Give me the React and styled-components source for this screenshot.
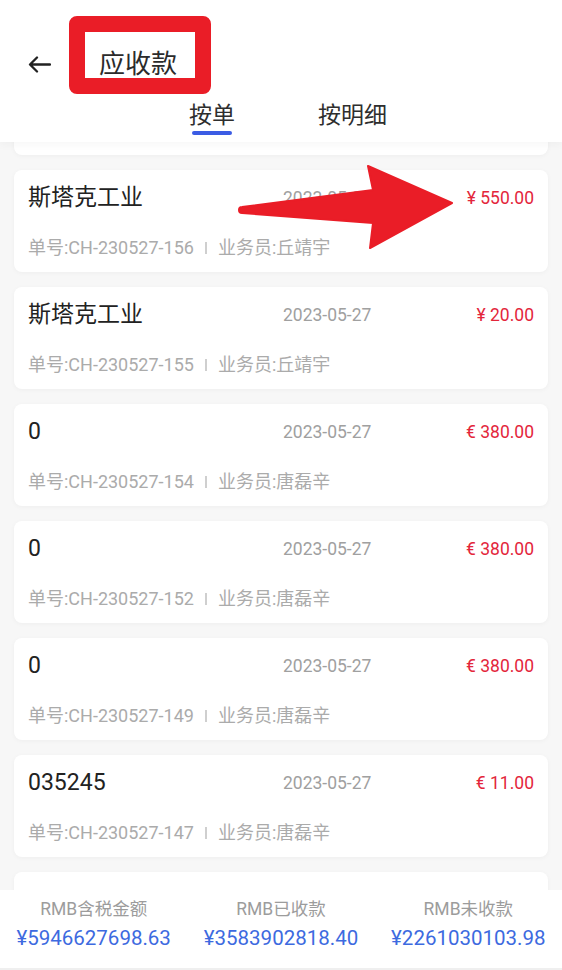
import styled, { createGlobalStyle } from 'styled-components'

const GlobalStyle = createGlobalStyle`
  html, body {
    margin: 0;
    padding: 0;
    background: #f7f7f7;
  }
  * {
    box-sizing: border-box;
  }
  body {
    font-family: Roboto, "Noto Sans CJK SC", sans-serif;
  }
`

const Page = styled.div`
  position: relative;
  height: 970px;
  display: flex;
  flex-direction: column;
  overflow: hidden;
  background: #f7f7f7;
`
const Header = styled.div`
  position: relative;
  z-index: 2;
  background: #fff;
  height: 142px;
  box-shadow: 0 3px 8px rgba(0, 0, 0, 0.035);
`
const TopBar = styled.div`
  display: flex;
  align-items: center;
  height: 48px;
  margin-top: 40px;
  padding-left: 27px;
`
const BackButton = styled.button`
  display: flex;
  align-items: center;
  justify-content: center;
  width: 24px;
  height: 24px;
  padding: 0;
  border: none;
  background: none;
  margin-right: 48px;
`
const Title = styled.h1`
  margin: 0;
  font-size: 26px;
  font-weight: 400;
  color: #2b2b2b;
  line-height: 48px;
`
const Tabs = styled.div`
  display: flex;
  justify-content: center;
  gap: 83px;
  margin-top: 14px;
  padding-left: 14px;
`
const Tab = styled.div`
  display: flex;
  flex-direction: column;
  align-items: center;
  font-size: 23px;
  line-height: 28px;
  color: #2e2e2e;

  &::after {
    content: '';
    width: 40px;
    height: 4px;
    margin-top: 1px;
    border-radius: 2px;
    background: ${(p) => (p.$active ? '#3b5ce4' : 'transparent')};
  }
`
const Scroller = styled.div`
  flex: 1;
  overflow: hidden;
  padding: 0 14px;
`
const List = styled.div`
  display: flex;
  flex-direction: column;
  gap: 15px;
  margin-top: ${(p) => -p.$offset}px;
`
const Card = styled.div`
  height: 102px;
  flex-shrink: 0;
  background: #fff;
  border-radius: 8px;
  box-shadow: 0 1px 5px rgba(0, 0, 0, 0.04);
  padding: 13px 14px 12px;
  display: grid;
  grid-template-columns: 255px 1fr auto;
  grid-template-rows: 30px 22px;
  row-gap: 24px;
  align-items: center;
`
const Name = styled.div`
  font-size: 23px;
  color: #222;
  line-height: 30px;
`
const DateText = styled.div`
  font-size: 17.5px;
  color: #a0a0a0;
`
const Amount = styled.div`
  font-size: 17.5px;
  color: #e3263b;
  text-align: right;
`
const Meta = styled.div`
  grid-column: 1 / -1;
  display: flex;
  align-items: center;
  font-size: 18px;
  line-height: 22px;
  color: #ababab;
`
const Divider = styled.span`
  width: 2px;
  height: 12px;
  margin: 0 11px;
  background: #cfcfcf;
`
const Footer = styled.div`
  height: 80px;
  background: #fff;
  display: grid;
  grid-template-columns: repeat(3, 1fr);
  padding-top: 6px;
  border-bottom: 2px solid #efefef;
`
const Stat = styled.div`
  display: flex;
  flex-direction: column;
  align-items: center;
  gap: 2px;
`
const StatLabel = styled.div`
  font-size: 17.5px;
  line-height: 26px;
  color: #9c9c9c;
`
const StatValue = styled.div`
  font-size: 20.5px;
  line-height: 28px;
  color: #3d6ae0;
`
const MarkBox = styled.div`
  position: absolute;
  left: 69px;
  top: 16px;
  width: 142px;
  height: 78px;
  border: 16px solid #ea1d27;
  border-radius: 8px;
  pointer-events: none;
`
const MarkArrow = styled.svg`
  position: absolute;
  left: 236px;
  top: 160px;
  z-index: 3;
  pointer-events: none;
`

const orders = [
  { name: '斯塔克工业', date: '2023-05-27', amount: '¥ 120.00', no: 'CH-230527-157', staff: '丘靖宇' },
  { name: '斯塔克工业', date: '2023-05-27', amount: '¥ 550.00', no: 'CH-230527-156', staff: '丘靖宇' },
  { name: '斯塔克工业', date: '2023-05-27', amount: '¥ 20.00', no: 'CH-230527-155', staff: '丘靖宇' },
  { name: '0', date: '2023-05-27', amount: '€ 380.00', no: 'CH-230527-154', staff: '唐磊辛' },
  { name: '0', date: '2023-05-27', amount: '€ 380.00', no: 'CH-230527-152', staff: '唐磊辛' },
  { name: '0', date: '2023-05-27', amount: '€ 380.00', no: 'CH-230527-149', staff: '唐磊辛' },
  { name: '035245', date: '2023-05-27', amount: '€ 11.00', no: 'CH-230527-147', staff: '唐磊辛' },
  { name: '035245', date: '2023-05-26', amount: '€ 11.00', no: 'CH-230526-146', staff: '唐磊辛' },
]

const totals = [
  { label: 'RMB含税金额', value: '¥5946627698.63' },
  { label: 'RMB已收款', value: '¥3583902818.40' },
  { label: 'RMB未收款', value: '¥2261030103.98' },
]

const BackIcon = () => (
  <svg width="23" height="17" viewBox="0 0 23 17" fill="none">
    <path d="M22 8.5H2.5M9 1.5L2 8.5L9 15.5" stroke="#222" strokeWidth="2.3" strokeLinecap="round" strokeLinejoin="round" />
  </svg>
)

const App = () => {
  return (
    <Page>
      <GlobalStyle />
      <Header>
        <TopBar>
          <BackButton aria-label="返回">
            <BackIcon />
          </BackButton>
          <Title>应收款</Title>
        </TopBar>
        <Tabs>
          <Tab $active>按单</Tab>
          <Tab>按明细</Tab>
        </Tabs>
        <MarkBox />
      </Header>

      <Scroller>
        <List $offset={89}>
          {orders.map((o) => (
            <Card key={o.no}>
              <Name>{o.name}</Name>
              <DateText>{o.date}</DateText>
              <Amount>{o.amount}</Amount>
              <Meta>
                <span>单号:{o.no}</span>
                <Divider />
                <span>业务员:{o.staff}</span>
              </Meta>
            </Card>
          ))}
        </List>
      </Scroller>

      <Footer>
        {totals.map((t) => (
          <Stat key={t.label}>
            <StatLabel>{t.label}</StatLabel>
            <StatValue>{t.value}</StatValue>
          </Stat>
        ))}
      </Footer>

      <MarkArrow width="222" height="94" viewBox="0 0 222 94">
        <path
          d="M6 47 L137 30 L132 6 L216 43 L134 88 L137 63 L6 53 A3 3 0 0 1 6 47 Z"
          fill="#ea1d27"
          stroke="#ea1d27"
          strokeWidth="2"
          strokeLinejoin="round"
        />
      </MarkArrow>
    </Page>
  )
}

export default App
